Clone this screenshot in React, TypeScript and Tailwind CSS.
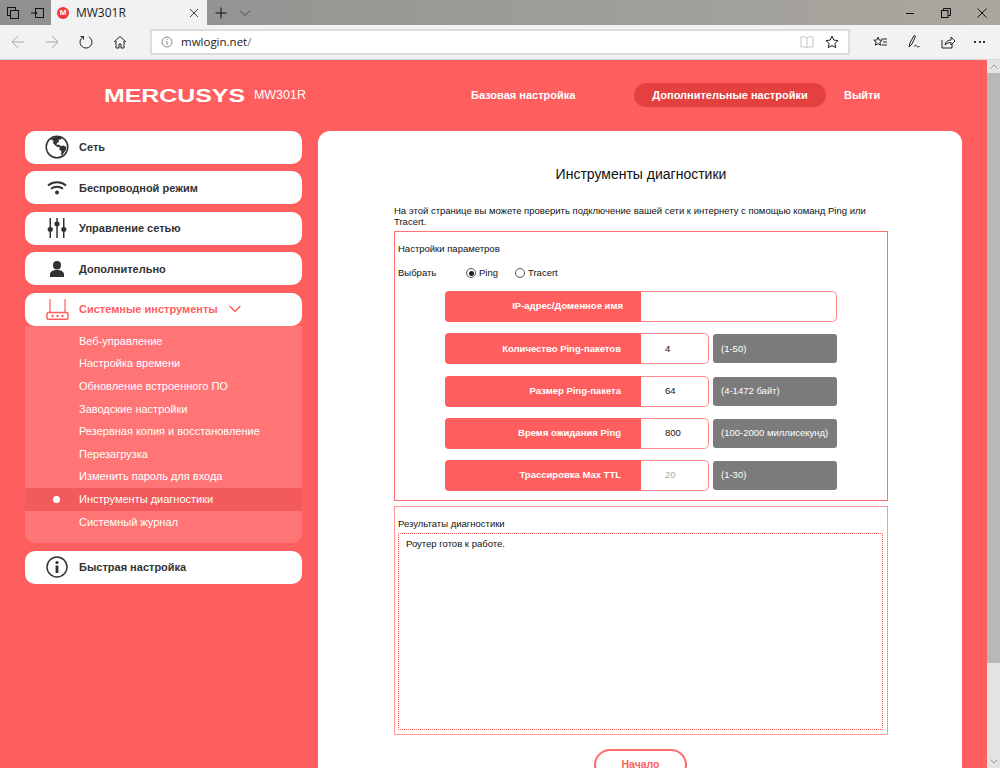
import type { ReactNode } from 'react';

const sub = [
  'Веб-управление',
  'Настройка времени',
  'Обновление встроенного ПО',
  'Заводские настройки',
  'Резервная копия и восстановление',
  'Перезагрузка',
  'Изменить пароль для входа',
  'Инструменты диагностики',
  'Системный журнал',
];

const rows = [
  { label: 'Количество Ping-пакетов', value: '4', hint: '(1-50)' },
  { label: 'Размер Ping-пакета', value: '64', hint: '(4-1472 байт)' },
  { label: 'Время ожидания Ping', value: '800', hint: '(100-2000 миллисекунд)' },
  { label: 'Трассировка Max TTL', value: '20', hint: '(1-30)', muted: true },
];

function Ico({ w = 16, h = 16, sw = 1, className, children }: { w?: number; h?: number; sw?: number; className?: string; children: ReactNode }) {
  return (
    <svg width={w} height={h} viewBox={`0 0 ${w} ${h}`} fill="none" stroke="currentColor" strokeWidth={sw} className={className}>
      {children}
    </svg>
  );
}

function MenuItem({ icon, label, active, extra }: { icon: ReactNode; label: string; active?: boolean; extra?: ReactNode }) {
  return (
    <div className="flex h-[33px] w-full items-center rounded-[10px] bg-white">
      <div className="flex w-[54px] shrink-0 pl-[15px] text-[#333]">
        <div className="flex w-[34px] justify-center">{icon}</div>
      </div>
      <span className={`text-[11px] font-bold ${active ? 'text-[#ff5e5e]' : 'text-[#333]'}`}>{label}</span>
      {extra}
    </div>
  );
}

export default function App() {
  return (
    <div className="flex h-[768px] w-[1000px] flex-col overflow-hidden font-['Liberation_Sans',Arial,sans-serif]">
      {/* title bar */}
      <div className="flex h-[25px] shrink-0 items-center bg-gradient-to-r from-[#8e8f8f] to-[#aaa79f] text-[#111]">
        <div className="flex w-[51px] items-center">
          <Ico w={14} h={14} className="ml-[6px]">
            <rect x="1.5" y="1.5" width="8" height="8" />
            <rect x="4.5" y="4.5" width="8" height="8" fill="#8f9090" />
          </Ico>
          <Ico w={14} h={14} className="ml-[11px]">
            <rect x="4.5" y="2.5" width="8" height="9" />
            <path d="M0 7h6M4 5l2 2-2 2" />
          </Ico>
        </div>
        <div className="flex h-[25px] w-[156px] items-center bg-[#f2f2f2]">
          <div className="ml-[6px] flex h-[12px] w-[12px] items-center justify-center rounded-full bg-[#ef3b3f] text-[8px] leading-none font-bold text-white">M</div>
          <span className="ml-[7px] font-['Open_Sans',sans-serif] text-[12px] text-[#222]">MW301R</span>
          <Ico w={10} h={10} className="ml-auto mr-[8px] text-[#444]">
            <path d="M1 1l8 8M9 1L1 9" />
          </Ico>
        </div>
        <Ico w={12} h={12} className="ml-[8px]">
          <path d="M6 .5v11M.5 6h11" />
        </Ico>
        <Ico w={12} h={8} className="ml-[12px] text-[#444]">
          <path d="M1 1.5L6 6.5l5-5" />
        </Ico>
        <div className="ml-auto flex items-center">
          <Ico w={10} h={10} className="mr-[26px]">
            <path d="M1 5.5h8" />
          </Ico>
          <Ico w={10} h={10} className="mr-[26px]">
            <rect x=".5" y="2.5" width="6.5" height="7" />
            <path d="M2.5 2.5v-2h7v7H7" />
          </Ico>
          <Ico w={10} h={10} className="mr-[13px]">
            <path d="M.5.5l9 9M9.5.5l-9 9" />
          </Ico>
        </div>
      </div>

      {/* toolbar */}
      <div className="flex h-[35px] shrink-0 items-center border-b border-[#d4d4d4] bg-[#f2f2f2] pb-[1px] text-[#222]">
        <Ico w={14} h={14} className="ml-[11px] text-[#a8a8a8]">
          <path d="M13 7H1M7 1L1 7l6 6" />
        </Ico>
        <Ico w={14} h={14} className="ml-[20px] text-[#a8a8a8]">
          <path d="M1 7h12M7 1l6 6-6 6" />
        </Ico>
        <Ico w={14} h={14} className="ml-[20px]">
          <path d="M9.8 1.8A6 6 0 1 1 4.2 1.8M4.5 4.5V1.5H1.5" />
        </Ico>
        <Ico w={14} h={14} className="ml-[20px]">
          <path d="M1 7l6-5.5L13 7M3 6v7h3V9h2v4h3V6" />
        </Ico>
        <div className="ml-[23px] flex h-[26px] w-[700px] items-center border-2 border-[#dcdcdc] bg-white">
          <Ico w={12} h={12} className="ml-[9px] text-[#888]">
            <circle cx="6" cy="6" r="5" />
            <path d="M6 5v4M6 3v1" />
          </Ico>
          <span className="ml-[8px] font-['Open_Sans',sans-serif] text-[11.5px] leading-none text-[#222]">
            mwlogin.net<span className="text-[#777]">/</span>
          </span>
          <Ico w={14} h={14} className="ml-auto text-[#c4c4c4]">
            <path d="M7 3C5.5 1.8 3 1.5 1 2v10c2-.5 4.500-.2 6 1 1.500-1.200 4-1.500 6-1V2C11 1.500 8.500 1.800 7 3zM7 3v10" />
          </Ico>
          <Ico w={14} h={14} className="ml-[11px] mr-[9px]">
            <path d="M7 1.200l1.800 3.900 4.200.5-3.100 2.900.8 4.200L7 10.600l-3.700 2.100.8-4.200L1 5.600l4.200-.5z" />
          </Ico>
        </div>
        <Ico w={14} h={14} className="ml-[23px]">
          <path d="M5 2l1.200 3 3 .2-2.300 2 .7 3L5 8.600l-2.600 1.600.7-3L.8 5.200l3-.2zM8.500 4H14M10 7h4M8.500 10H14" />
        </Ico>
        <Ico w={14} h={15} className="ml-[21px]">
          <path d="M1 13l1-4 4-7.500 1.500.8L4 10zM6 12.500c1-1.500 2-1.500 2.500-.5s1.500 1 3 .5" />
        </Ico>
        <Ico w={15} h={14} className="ml-[19px]">
          <path d="M1 5v8h10V9M4 10c.5-3 3-5 6-5V2l4 4-4 4V7.500c-2.500 0-4.500 1-6 2.500z" />
        </Ico>
        <div className="ml-[18px] flex gap-[2.500px]">
          <div className="h-[2px] w-[2px] bg-[#333]" />
          <div className="h-[2px] w-[2px] bg-[#333]" />
          <div className="h-[2px] w-[2px] bg-[#333]" />
        </div>
      </div>

      {/* page */}
      <div className="flex min-h-0 flex-1">
        <div className="min-w-0 flex-1 overflow-hidden bg-[#ff5e5e]">
          {/* header */}
          <div className="flex h-[70.750px] items-center text-white">
            <div className="ml-[104px] flex w-[202px] items-center">
              <span className="w-[141px] origin-left scale-x-[1.31] text-[19px] leading-none font-bold whitespace-nowrap">MERCUSYS</span>
              <span className="ml-[9px] text-[12.500px] leading-none">MW301R</span>
            </div>
            <span className="ml-[165px] w-[104px] text-[11px] font-bold whitespace-nowrap">Базовая настройка</span>
            <div className="ml-[59px] flex h-[24px] w-[192px] items-center justify-center rounded-full bg-[#e54040] text-[11px] font-bold whitespace-nowrap">
              Дополнительные настройки
            </div>
            <span className="ml-[18px] text-[11px] font-bold">Выйти</span>
          </div>

          <div className="flex items-start pl-[25px]">
            {/* sidebar */}
            <div className="w-[277px] shrink-0">
              <div className="flex flex-col gap-[7.500px]">
                <MenuItem
                  label="Сеть"
                  icon={
                    <svg width="24" height="24" viewBox="0 0 24 24">
                      <circle cx="12" cy="12" r="10.800" fill="none" stroke="currentColor" strokeWidth="1.500" />
                      <path fill="currentColor" d="M6 4c3-2.500 8-3 11-1.500l-1 2-2.500.2.500 2-2 1.300-.5 2 2.500-.5 1.500 1.500 3-.5 3 1.500-.8 3.500-3.500 4.500-1.200.3.500-4-2-1.500v-2.500l-3-.8-3.500-3.200.5-2.500-2-.8z" />
                    </svg>
                  }
                />
                <MenuItem
                  label="Беспроводной режим"
                  icon={
                    <svg width="20" height="14" viewBox="0 0 20 14" fill="none" stroke="currentColor" strokeWidth="2">
                      <path d="M1 4.500C6 .2 14 .2 19 4.500M4 7.800c3.500-2.800 8.500-2.800 12 0" />
                      <circle cx="10" cy="11.500" r="2" fill="currentColor" stroke="none" />
                    </svg>
                  }
                />
                <MenuItem
                  label="Управление сетью"
                  icon={
                    <svg width="20" height="20" viewBox="0 0 20 20" fill="currentColor">
                      <rect x="2.500" y="0" width="1.500" height="20" />
                      <rect x="9.300" y="0" width="1.500" height="20" />
                      <rect x="16" y="0" width="1.500" height="20" />
                      <ellipse cx="3.300" cy="11.500" rx="2.600" ry="2.400" />
                      <ellipse cx="10" cy="6" rx="2.600" ry="2.400" />
                      <ellipse cx="16.800" cy="11.500" rx="2.600" ry="2.400" />
                    </svg>
                  }
                />
                <MenuItem
                  label="Дополнительно"
                  icon={
                    <svg width="16" height="16" viewBox="0 0 16 16" fill="currentColor">
                      <ellipse cx="8" cy="4.200" rx="4" ry="4.200" />
                      <path d="M1 16v-2.500C1 11 3.500 9 8 9s7 2 7 4.500V16z" />
                    </svg>
                  }
                />
                <div>
                  <MenuItem
                    active
                    label="Системные инструменты"
                    icon={
                      <svg width="23" height="21" viewBox="0 0 23 21" fill="none" stroke="#ff5e5e" strokeWidth="1.200">
                        <path d="M4 0v13.500M19 0v13.500" />
                        <rect x="1" y="13.500" width="21" height="6.800" rx="1.500" strokeWidth="1.500" />
                        <circle cx="6.500" cy="17" r="1.200" fill="#ff5e5e" stroke="none" />
                        <circle cx="11.500" cy="17" r="1.200" fill="#ff5e5e" stroke="none" />
                        <circle cx="16.500" cy="17" r="1.200" fill="#ff5e5e" stroke="none" />
                      </svg>
                    }
                    extra={
                      <svg width="12" height="8" viewBox="0 0 12 8" fill="none" stroke="#ff5e5e" strokeWidth="1.500" className="ml-[11px]">
                        <path d="M.7 1l5.300 5.500L11.300 1" />
                      </svg>
                    }
                  />
                  <div className="rounded-b-[10px] bg-[#ff7575] pt-[4px] pb-[10px]">
                    {sub.map((item, i) => (
                      <div key={item} className={`flex h-[22.600px] items-center text-[11px] text-white ${i === 7 ? 'bg-[#f35a5d]' : ''}`}>
                        <div className="flex w-[54px] justify-end pr-[19.500px]">
                          {i === 7 && <div className="h-[7px] w-[7px] rounded-full bg-white" />}
                        </div>
                        <span>{item}</span>
                      </div>
                    ))}
                  </div>
                </div>
                <MenuItem
                  label="Быстрая настройка"
                  icon={
                    <svg width="22" height="22" viewBox="0 0 22 22">
                      <circle cx="11" cy="11" r="10" fill="none" stroke="currentColor" strokeWidth="1.500" />
                      <circle cx="11" cy="6.500" r="1.600" fill="currentColor" />
                      <rect x="9.600" y="9.500" width="2.800" height="7.500" fill="currentColor" />
                    </svg>
                  }
                />
              </div>
            </div>

            {/* content card */}
            <div className="mt-[0.250px] ml-[16px] h-[700px] w-[644px] shrink-0 rounded-t-[12px] bg-white pr-[74px] pl-[76px] text-[9.500px] text-[#111]">
              <h1 className="pt-[35px] text-center text-[14px] leading-[17px] font-normal">Инструменты диагностики</h1>
              <p className="mt-[22px] leading-[11px]">
                На этой странице вы можете проверить подключение вашей сети к интернету с помощью команд Ping или Tracert.
              </p>

              <div className="mt-[4px] h-[270px] border border-[#ff7072] px-[3px]">
                <div className="pt-[10px] leading-[13px]">Настройки параметров</div>
                <div className="mt-[11px] flex h-[14px] items-center">
                  <span className="w-[68px]">Выбрать</span>
                  <span className="flex h-[10px] w-[10px] items-center justify-center rounded-full border border-[#555]">
                    <span className="h-[5px] w-[5px] rounded-full bg-[#222]" />
                  </span>
                  <span className="ml-[3px] w-[36px]">Ping</span>
                  <span className="h-[10px] w-[10px] rounded-full border border-[#555]" />
                  <span className="ml-[3px]">Tracert</span>
                </div>

                <div className="mt-[11px] ml-[47px] flex flex-col gap-[11.250px]">
                  <div className="flex h-[31px]">
                    <div className="flex w-[196px] items-center justify-end rounded-l-[4px] bg-[#ff5e5e] pr-[18px] font-bold text-white">IP-адрес/Доменное имя</div>
                    <div className="w-[196px] rounded-r-[5px] border border-l-0 border-[#ff8a8a] bg-white" />
                  </div>
                  {rows.map((row) => (
                    <div key={row.label} className="flex h-[31px]">
                      <div className="flex w-[196px] items-center justify-end rounded-l-[4px] bg-[#ff5e5e] pr-[20px] font-bold text-white">{row.label}</div>
                      <div className={`flex w-[68px] items-center rounded-r-[5px] border border-l-0 border-[#ff8a8a] bg-white pl-[24px] ${row.muted ? 'text-[#aaa]' : 'text-[#111]'}`}>
                        {row.value}
                      </div>
                      <div className="my-[1px] ml-[4px] flex w-[124px] items-center rounded-[3px] bg-[#7b7b7b] pl-[8px] whitespace-nowrap text-white">{row.hint}</div>
                    </div>
                  ))}
                </div>
              </div>

              <div className="mt-[5px] h-[229px] border border-[#ff9a9a] px-[3px]">
                <div className="pt-[10px] leading-[13px]">Результаты диагностики</div>
                <div className="mt-[3px] h-[197px] w-[485px] border border-dotted border-[#ff5e5e] px-[7px] pt-[3px] leading-[13px]">Роутер готов к работе.</div>
              </div>

              <div className="mt-[14px] flex justify-center pr-[1px]">
                <button className="h-[32px] w-[93px] rounded-[16px] border-2 border-[#ff6b6b] bg-white text-[10.500px] font-bold text-[#ff5e5e]">Начало</button>
              </div>
            </div>
          </div>
        </div>

        {/* scrollbar */}
        <div className="flex w-[13px] shrink-0 flex-col bg-[#e3e3e3]">
          <div className="flex h-[13px] items-center justify-center">
            <Ico w={8} h={5} className="text-[#999]">
              <path d="M.5 4.500L4 1l3.500 3.500" />
            </Ico>
          </div>
          <div className="h-[590px] bg-[#b8b8b8]" />
          <div className="mt-auto flex h-[13px] items-center justify-center">
            <Ico w={8} h={5} className="text-[#999]">
              <path d="M.5.500L4 4l3.500-3.500" />
            </Ico>
          </div>
        </div>
      </div>
    </div>
  );
}
